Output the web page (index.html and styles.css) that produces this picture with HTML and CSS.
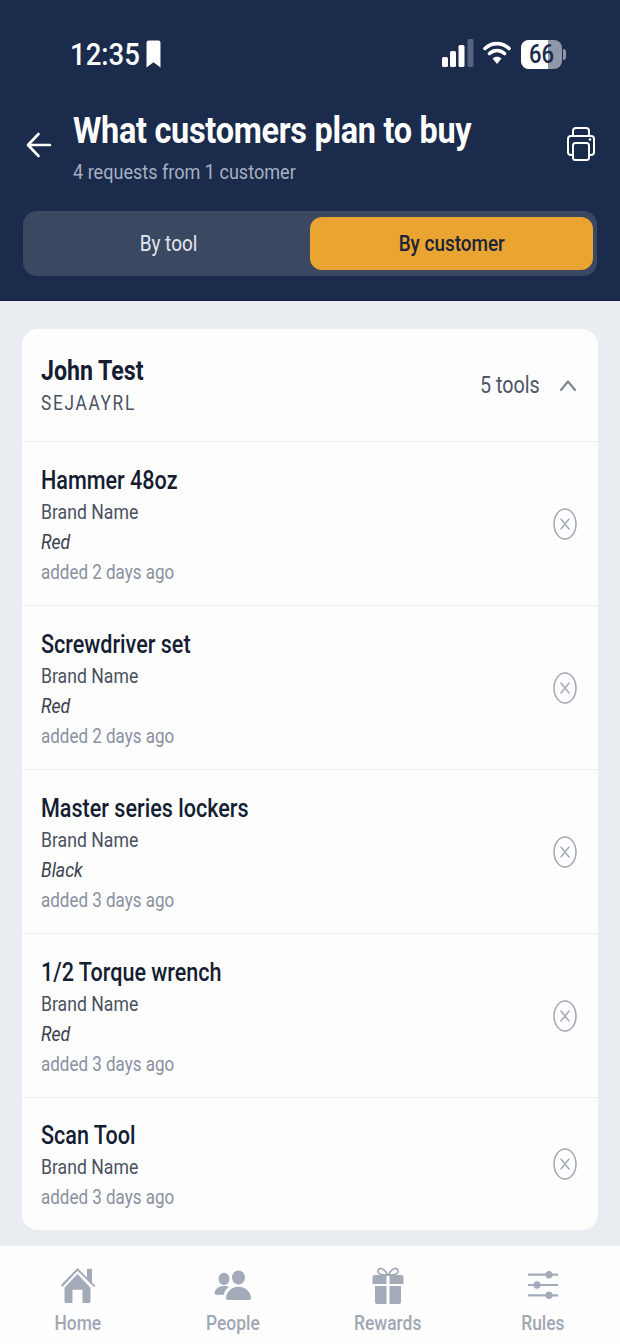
FILE: index.html
```html
<!DOCTYPE html>
<html lang="en">
<head>
<meta charset="utf-8">
<title>What customers plan to buy</title>
<link rel="stylesheet" href="styles.css">
</head>
<body>
<div class="app">
  <header class="top">
    <div class="status">
      <div class="status-left">
        <span class="clock">12:35</span>
        <svg class="bookmark" width="15" height="29" viewBox="0 0 14 30" preserveAspectRatio="none"><path d="M2.5 0.5h9a2 2 0 0 1 2 2V28.500l-6.500-5.500-6.500 5.500V2.500a2 2 0 0 1 2-2z" fill="#fff"/></svg>
      </div>
      <div class="status-right">
        <svg class="signal" width="32" height="28" viewBox="0 0 32 28"><rect x="0" y="18" width="6" height="10" rx="1.500" fill="#fff"/><rect x="8" y="12" width="6" height="16" rx="1.500" fill="#fff"/><rect x="16.500" y="6" width="6" height="22" rx="1.500" fill="#fff"/><rect x="25.500" y="0" width="6" height="28" rx="1.500" fill="#56637d"/></svg>
        <svg class="wifi" width="28" height="28" viewBox="0 0 28 28"><path d="M2 9.500C9 3 19 3 26 9.500M6.500 14.500C11 10.500 17 10.500 21.500 14.500" fill="none" stroke="#fff" stroke-width="3.600" stroke-linecap="round"/><path d="M9.500 19.500c2.500-2.200 6.500-2.200 9 0L14 25z" fill="#fff"/></svg>
        <div class="battery"><span class="battery-fill"></span><span class="battery-num">66</span></div>
        <span class="battery-cap"></span>
      </div>
    </div>
    <div class="title-row">
      <svg class="back" width="28" height="30" viewBox="0 0 28 30"><path d="M25 15H4M13.500 4L3 15l10.500 11" fill="none" stroke="#fff" stroke-width="2.600" stroke-linecap="round" stroke-linejoin="round"/></svg>
      <div class="title-text">
        <h1 class="title">What customers plan to buy</h1>
        <p class="subtitle">4 requests from 1 customer</p>
      </div>
      <svg class="printer" width="28" height="36" viewBox="0 0 28 36"><path d="M6 10V5a3 3 0 0 1 3-3h10a3 3 0 0 1 3 3v5" fill="none" stroke="#fff" stroke-width="2"/><path d="M6 29H4a3 3 0 0 1-3-3V13a3 3 0 0 1 3-3h20a3 3 0 0 1 3 3v13a3 3 0 0 1-3 3h-2" fill="none" stroke="#fff" stroke-width="2"/><rect x="6" y="17" width="16" height="17" rx="2.500" fill="none" stroke="#fff" stroke-width="2"/><circle cx="23" cy="13.500" r="1.300" fill="#fff"/></svg>
    </div>
    <div class="tabs">
      <div class="tab"><span class="tab-label">By tool</span></div>
      <div class="tab tab-active"><span class="tab-label">By customer</span></div>
    </div>
  </header>

  <main class="content">
    <section class="card">
      <div class="cust">
        <div>
          <div class="cust-name">John Test</div>
          <div class="cust-code">SEJAAYRL</div>
        </div>
        <div class="cust-right">
          <span class="cust-count">5 tools</span>
          <svg width="18" height="12" viewBox="0 0 18 12"><path d="M2 11L9 2.500 16 11" fill="none" stroke="#7f8795" stroke-width="2.200" stroke-linecap="round" stroke-linejoin="round"/></svg>
        </div>
      </div>

      <div class="item">
        <div class="item-body">
          <div class="item-name">Hammer 48oz</div>
          <div class="item-brand">Brand Name</div>
          <div class="item-color">Red</div>
          <div class="item-date">added 2 days ago</div>
        </div>
        <svg class="remove" width="24" height="32" viewBox="0 0 24 32"><ellipse cx="12" cy="16" rx="11" ry="15" fill="none" stroke="#a3aab6" stroke-width="1.600"/><path d="M8 11l8 10M16 11l-8 10" fill="none" stroke="#a3aab6" stroke-width="1.500" stroke-linecap="round"/></svg>
      </div>
      <div class="item">
        <div class="item-body">
          <div class="item-name">Screwdriver set</div>
          <div class="item-brand">Brand Name</div>
          <div class="item-color">Red</div>
          <div class="item-date">added 2 days ago</div>
        </div>
        <svg class="remove" width="24" height="32" viewBox="0 0 24 32"><ellipse cx="12" cy="16" rx="11" ry="15" fill="none" stroke="#a3aab6" stroke-width="1.600"/><path d="M8 11l8 10M16 11l-8 10" fill="none" stroke="#a3aab6" stroke-width="1.500" stroke-linecap="round"/></svg>
      </div>
      <div class="item">
        <div class="item-body">
          <div class="item-name">Master series lockers</div>
          <div class="item-brand">Brand Name</div>
          <div class="item-color">Black</div>
          <div class="item-date">added 3 days ago</div>
        </div>
        <svg class="remove" width="24" height="32" viewBox="0 0 24 32"><ellipse cx="12" cy="16" rx="11" ry="15" fill="none" stroke="#a3aab6" stroke-width="1.600"/><path d="M8 11l8 10M16 11l-8 10" fill="none" stroke="#a3aab6" stroke-width="1.500" stroke-linecap="round"/></svg>
      </div>
      <div class="item">
        <div class="item-body">
          <div class="item-name">1/2 Torque wrench</div>
          <div class="item-brand">Brand Name</div>
          <div class="item-color">Red</div>
          <div class="item-date">added 3 days ago</div>
        </div>
        <svg class="remove" width="24" height="32" viewBox="0 0 24 32"><ellipse cx="12" cy="16" rx="11" ry="15" fill="none" stroke="#a3aab6" stroke-width="1.600"/><path d="M8 11l8 10M16 11l-8 10" fill="none" stroke="#a3aab6" stroke-width="1.500" stroke-linecap="round"/></svg>
      </div>
      <div class="item item-last">
        <div class="item-body">
          <div class="item-name">Scan Tool</div>
          <div class="item-brand">Brand Name</div>
          <div class="item-date">added 3 days ago</div>
        </div>
        <svg class="remove" width="24" height="32" viewBox="0 0 24 32"><ellipse cx="12" cy="16" rx="11" ry="15" fill="none" stroke="#a3aab6" stroke-width="1.600"/><path d="M8 11l8 10M16 11l-8 10" fill="none" stroke="#a3aab6" stroke-width="1.500" stroke-linecap="round"/></svg>
      </div>
    </section>
  </main>

  <nav class="nav">
    <div class="nav-item">
      <div class="nav-icon"><svg width="36" height="38" viewBox="0 0 36 40" preserveAspectRatio="none"><path d="M1 20L17.500 2 27 12V3h5v14.500l3.500 3-1.500 1.500L17.500 5 2.500 22z" fill="#a3abb9"/><path d="M4.500 23L17.500 8.500 30.500 23v14a2 2 0 0 1-2 2h-6V25h-10v14h-6a2 2 0 0 1-2-2z" fill="#a3abb9"/></svg></div>
      <span class="nav-label">Home</span>
    </div>
    <div class="nav-item">
      <div class="nav-icon"><svg width="38" height="30" viewBox="0 0 38 34" preserveAspectRatio="none"><ellipse cx="10" cy="10" rx="5.500" ry="7" fill="#a3abb9"/><ellipse cx="24.500" cy="8.500" rx="6.500" ry="8" fill="#a3abb9"/><path d="M0.500 27c0-5 4-9 9.500-9 2 0 3.500 .4 5 1.300-3 2-4.500 5-5 8.700H2a1.500 1.500 0 0 1-1.500-1z" fill="#a3abb9"/><path d="M12 32c0-7 5.500-13 12.500-13S37 25 37 32a2 2 0 0 1-2 2H14a2 2 0 0 1-2-2z" fill="#a3abb9"/></svg></div>
      <span class="nav-label">People</span>
    </div>
    <div class="nav-item">
      <div class="nav-icon"><svg width="32" height="38" viewBox="0 0 32 38"><path d="M15.500 9C12 1 6 1 6 5.500 6 8 9 9 15.500 9zM16.500 9C20 1 26 1 26 5.500 26 8 23 9 16.500 9z" fill="none" stroke="#a3abb9" stroke-width="1.800"/><path d="M3 9h11.500v9H0.500v-6.500A2.500 2.500 0 0 1 3 9zM17.500 9H29a2.500 2.500 0 0 1 2.500 2.500V18h-14z" fill="#a3abb9"/><path d="M3 20h11.500v18H5a2 2 0 0 1-2-2zM17.500 20H29v16a2 2 0 0 1-2 2h-9.500z" fill="#a3abb9"/></svg></div>
      <span class="nav-label">Rewards</span>
    </div>
    <div class="nav-item">
      <div class="nav-icon"><svg width="32" height="32" viewBox="0 0 32 34" preserveAspectRatio="none"><path d="M1 6h30M1 17h30M1 28h30" stroke="#a3abb9" stroke-width="2.200" fill="none"/><ellipse cx="22" cy="6" rx="3.500" ry="4" fill="#a3abb9"/><ellipse cx="10" cy="17" rx="3.500" ry="4" fill="#a3abb9"/><ellipse cx="22" cy="28" rx="3.500" ry="4" fill="#a3abb9"/></svg></div>
      <span class="nav-label">Rules</span>
    </div>
  </nav>
</div>
</body>
</html>
```

FILE: styles.css
```css
* { box-sizing: border-box; }
html, body { margin: 0; padding: 0; }
body {
  width: 620px;
  height: 1344px;
  overflow: hidden;
  font-family: Roboto, "Liberation Sans", sans-serif;
  background: #e9edf1;
}
.app { display: flex; flex-direction: column; height: 1344px; }

/* The reference type is narrower than any installed family, so text is condensed with scaleX. */
.top {
  height: 302px;
  background: #1a2b4b;
  border-bottom: 1px solid #16233d;
  padding-top: 38px;
  color: #fff;
}
.status {
  display: flex;
  justify-content: space-between;
  align-items: center;
  height: 32px;
  padding: 0 54px 0 70px;
}
.status-left { display: flex; align-items: center; gap: 9px; }
.clock {
  width: 67px;
  font-size: 32px;
  font-weight: 500;
  white-space: nowrap;
  transform: scaleX(0.86);
  transform-origin: left center;
}
.status-right { display: flex; align-items: center; gap: 9px; }
.signal { margin-bottom: 3px; }
.wifi { margin-bottom: 2px; margin-right: 1px; }
.battery {
  position: relative;
  width: 41px;
  height: 29px;
  border-radius: 8px;
  background: #8f97a8;
  overflow: hidden;
}
.battery-fill {
  position: absolute;
  left: 0;
  top: 0;
  bottom: 0;
  width: 27px;
  background: #fff;
}
.battery-num {
  position: absolute;
  inset: 0;
  text-align: center;
  color: #1a2b4b;
  font-size: 25px;
  line-height: 29px;
  font-weight: 500;
  transform: scaleX(0.88);
}
.battery-cap {
  width: 3px;
  height: 11px;
  margin-left: -8px;
  border-radius: 0 3px 3px 0;
  background: #8f97a8;
}

.title-row {
  display: flex;
  align-items: flex-start;
  padding: 0 25px 0 25px;
  margin-top: 39px;
}
.back { margin-top: 21px; flex: none; }
.title-text { flex: 1; margin-left: 20px; }
.title {
  margin: 0;
  font-size: 36px;
  line-height: 44px;
  font-weight: 700;
  letter-spacing: -0.3px;
  color: #fff;
  white-space: nowrap;
  transform: scaleX(0.9);
  transform-origin: left center;
}
.subtitle {
  margin: 6px 0 0;
  font-size: 21px;
  line-height: 27px;
  color: #a7b0c2;
  white-space: nowrap;
  transform: scaleX(0.86);
  transform-origin: left center;
}
.printer { margin-top: 17px; flex: none; }

.tabs {
  display: flex;
  height: 65px;
  margin: 25px 23px 0;
  padding: 6px 4px 6px 4px;
  border-radius: 14px;
  background: #3a4862;
}
.tab {
  flex: 1;
  display: flex;
  align-items: center;
  justify-content: center;
  font-size: 22px;
  color: #e3e6ec;
  border-radius: 12px;
}
.tab-label { transform: scaleX(0.86); }
.tab-active { background: #e9a431; color: #1b2436; font-weight: 500; }

.content { flex: 1; padding: 28px 22px 16px; }
.card {
  background: #fdfdfe;
  border-radius: 16px;
  overflow: hidden;
}
.cust {
  display: flex;
  justify-content: space-between;
  align-items: center;
  height: 113px;
  padding: 0 21px 0 19px;
  border-bottom: 1px solid #eceef1;
}
.cust-name {
  font-size: 27px;
  line-height: 34px;
  font-weight: 700;
  color: #151d33;
  transform: scaleX(0.857);
  transform-origin: left center;
}
.cust-code {
  margin-top: 2px;
  font-size: 20px;
  line-height: 26px;
  letter-spacing: 2px;
  color: #4a5160;
  transform: scaleX(0.86);
  transform-origin: left center;
}
.cust-right { display: flex; align-items: center; gap: 19px; }
.cust-count {
  font-size: 23px;
  color: #4e5564;
  transform: scaleX(0.855);
  transform-origin: right center;
}

.item {
  display: flex;
  justify-content: space-between;
  align-items: center;
  height: 164px;
  padding: 2px 21px 0 19px;
  border-bottom: 1px solid #eceef1;
}
.item-last { height: 132px; border-bottom: 0; }
.item-body { flex: 1; }
.item-name {
  font-size: 26px;
  line-height: 34px;
  font-weight: 500;
  color: #151d33;
  transform: scaleX(0.83);
  transform-origin: left center;
}
.item-brand {
  font-size: 21px;
  line-height: 30px;
  color: #4a5160;
  transform: scaleX(0.84);
  transform-origin: left center;
}
.item-color {
  font-size: 21px;
  line-height: 30px;
  font-style: italic;
  color: #3a404d;
  transform: scaleX(0.84);
  transform-origin: left center;
}
.item-date {
  font-size: 20px;
  line-height: 30px;
  color: #8a90a0;
  transform: scaleX(0.85);
  transform-origin: left center;
}
.remove { flex: none; margin-bottom: 2px; }

.nav {
  display: flex;
  justify-content: space-around;
  height: 98px;
  background: #fefefe;
}
.nav-item {
  width: 155px;
  display: flex;
  flex-direction: column;
  align-items: center;
  justify-content: flex-end;
  height: 89px;
}
.nav-icon {
  height: 40px;
  display: flex;
  align-items: center;
  justify-content: center;
}
.nav-label {
  margin-top: 6px;
  font-size: 20px;
  line-height: 24px;
  font-weight: 500;
  color: #a0a7b4;
  transform: scaleX(0.87);
}
```
